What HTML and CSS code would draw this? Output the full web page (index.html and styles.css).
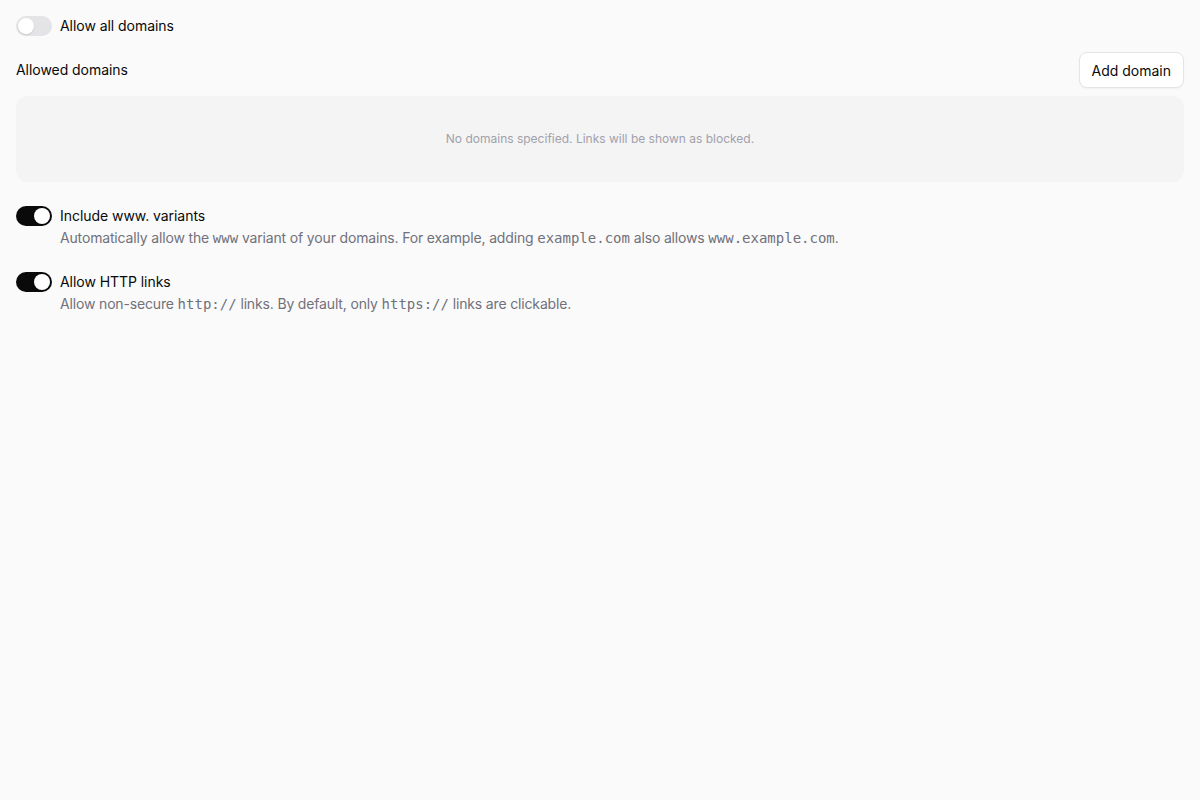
FILE: index.html
```html
<!DOCTYPE html>
<html lang="en">
<head>
<meta charset="utf-8">
<title>Link settings</title>
<link rel="stylesheet" href="styles.css">
</head>
<body>
<main class="settings">
  <label class="toggle-row">
    <span class="switch"><span class="knob"></span></span>
    <span class="title">Allow all domains</span>
  </label>

  <section class="domains">
    <div class="domains-head">
      <span class="title">Allowed domains</span>
      <button class="btn" type="button">Add domain</button>
    </div>
    <div class="empty">No domains specified. Links will be shown as blocked.</div>
  </section>

  <div class="options">
    <div class="option">
      <span class="switch on"><span class="knob"></span></span>
      <div class="option-text">
        <span class="title">Include www. variants</span>
        <p class="desc">Automatically allow the <code>www</code> variant of your domains. For example, adding <code>example.com</code> also allows <code>www.example.com</code>.</p>
      </div>
    </div>
    <div class="option">
      <span class="switch on"><span class="knob"></span></span>
      <div class="option-text">
        <span class="title">Allow HTTP links</span>
        <p class="desc">Allow non-secure <code>http://</code> links. By default, only <code>https://</code> links are clickable.</p>
      </div>
    </div>
  </div>
</main>
</body>
</html>
```

FILE: styles.css
```css
* { box-sizing: border-box; }

html, body {
  margin: 0;
  background: #fafafa;
  color: #09090b;
  font-family: Inter, "Noto Sans", sans-serif;
  font-size: 14px;
  line-height: 20px;
}

.settings {
  padding: 16px;
  display: flex;
  flex-direction: column;
}

.toggle-row {
  display: flex;
  align-items: center;
  gap: 8px;
}

.switch {
  flex: none;
  width: 36px;
  height: 20px;
  border-radius: 10px;
  background: #e4e4e7;
  padding: 2px;
  display: flex;
  align-items: center;
}

.knob {
  width: 16px;
  height: 16px;
  border-radius: 50%;
  background: #ffffff;
  box-shadow: 0 1px 2px rgba(0, 0, 0, 0.12);
}

.switch.on {
  background: #0a0a0a;
  justify-content: flex-end;
}

.title {
  font-size: 14px;
  line-height: 20px;
  font-weight: 400;
  letter-spacing: -0.05px;
}

.domains {
  margin-top: 16px;
  display: flex;
  flex-direction: column;
  gap: 8px;
}

.domains-head {
  display: flex;
  align-items: center;
  justify-content: space-between;
}

.btn {
  height: 36px;
  padding: 0 12px;
  border: 1px solid #e4e4e7;
  border-radius: 8px;
  background: #ffffff;
  color: #09090b;
  font-family: inherit;
  font-size: 14px;
  box-shadow: 0 1px 2px rgba(0, 0, 0, 0.04);
}

.empty {
  height: 86px;
  border-radius: 12px;
  background: #f4f4f5;
  display: flex;
  align-items: center;
  justify-content: center;
  color: #a1a1aa;
  font-size: 12px;
}

.options {
  margin-top: 24px;
  display: flex;
  flex-direction: column;
  gap: 24px;
}

.option {
  display: flex;
  align-items: flex-start;
  gap: 8px;
}

.option-text {
  display: flex;
  flex-direction: column;
  gap: 2px;
}

.desc {
  margin: 0;
  color: #71717a;
  font-size: 14px;
  line-height: 20px;
  letter-spacing: -0.16px;
}

code {
  font-family: "DejaVu Sans Mono", monospace;
  font-size: 14px;
  letter-spacing: 0;
}
```
